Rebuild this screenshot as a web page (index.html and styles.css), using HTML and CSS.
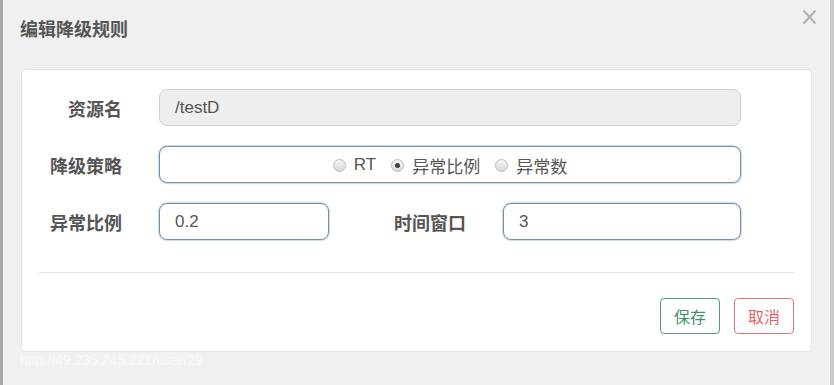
FILE: index.html
```html
<!DOCTYPE html>
<html lang="zh-CN">
<head>
    <meta charset="UTF-8">
    <title>编辑降级规则</title>
    <link rel="stylesheet" href="styles.css">
</head>
<body>
    <div class="frame">
        <div class="modal-header">
            <h3 class="modal-title">编辑降级规则</h3>
            <button class="close" type="button">
                <svg width="15" height="16" viewBox="0 0 15 16"><path d="M1.5 1.5 L13.5 14.5 M13.5 1.5 L1.5 14.5" stroke="#b0b0b0" stroke-width="2" fill="none"/></svg>
            </button>
        </div>

        <div class="panel">
            <div class="form-row">
                <label class="label">资源名</label>
                <input class="input input-disabled input-wide" type="text" value="/testD" disabled>
            </div>
            <div class="form-row">
                <label class="label">降级策略</label>
                <div class="input input-wide radio-group">
                    <span class="radio"><i class="dot"></i>RT</span>
                    <span class="radio"><i class="dot checked"></i>异常比例</span>
                    <span class="radio"><i class="dot"></i>异常数</span>
                </div>
            </div>
            <div class="form-row">
                <label class="label">异常比例</label>
                <input class="input input-short" type="text" value="0.2">
                <label class="label label-inline">时间窗口</label>
                <input class="input input-mid" type="text" value="3">
            </div>

            <div class="divider"></div>

            <div class="actions">
                <button class="btn btn-save" type="button">保存</button>
                <button class="btn btn-cancel" type="button">取消</button>
            </div>
        </div>

        <div class="url">http://49.235.245.221/user/29</div>
    </div>
</body>
</html>
```

FILE: styles.css
```css
body {
    margin: 0;
    padding: 0;
    background-color: #f0f0f0;
    font-family: "Liberation Sans", "Noto Sans CJK SC", sans-serif;
}

/* окно диалога */
.frame {
    height: 385px;
    box-sizing: border-box;
    border-left: 3px solid #a8a8a8;
    border-right: 4px solid #c9c9c9;
    background-color: #f0f0f0;
}

.modal-header {
    display: flex;
    justify-content: space-between;
    align-items: flex-start;
    height: 69px;
    padding-left: 17px;
    padding-right: 13px;
}

.modal-title {
    margin: 18px 0 0;
    font-size: 18px;
    line-height: 24px;
    font-weight: bold;
    color: #555;
}

.close {
    margin-top: 9px;
    padding: 0;
    border: none;
    background: transparent;
    cursor: pointer;
}

.panel {
    margin-left: 18px;
    width: 791px;
    height: 283px;
    box-sizing: border-box;
    background-color: #fff;
    border: 1px solid #e3e3e3;
    border-radius: 4px;
    padding-top: 19px;
}

.form-row {
    display: flex;
    align-items: center;
    margin-bottom: 20px;
}

.label {
    width: 100px;
    margin-right: 37px;
    text-align: right;
    font-size: 18px;
    font-weight: bold;
    color: #555;
}

.label-inline {
    width: 74px;
    margin-left: 63px;
}

.input {
    height: 37px;
    box-sizing: border-box;
    padding: 0 15px;
    font-family: inherit;
    font-size: 17px;
    color: #555;
    background-color: #fff;
    border: 1px solid #6f90b1;
    border-radius: 8px;
    box-shadow: 0 0 1px 1px rgba(110, 145, 180, 0.35);
    outline: none;
}

.input-disabled {
    background-color: #eee;
    border-color: #cfcfcf;
    box-shadow: none;
}

.input-wide {
    width: 582px;
}

.input-short {
    width: 170px;
}

.input-mid {
    width: 238px;
}

.radio-group {
    display: flex;
    justify-content: center;
    align-items: center;
    gap: 15px;
    padding-top: 1px;
}

.radio {
    display: flex;
    align-items: center;
    font-size: 17px;
    color: #555;
}

.dot {
    width: 11px;
    height: 11px;
    margin-right: 8px;
    border: 1px solid #bdbdbd;
    border-radius: 50%;
    background: linear-gradient(#f6f6f6, #d9d9d9);
    position: relative;
}

.dot.checked::after {
    content: "";
    position: absolute;
    left: 3px;
    top: 3px;
    width: 5px;
    height: 5px;
    border-radius: 50%;
    background-color: #444;
}

.divider {
    margin: 32px 17px 0;
    border-top: 1px solid #e6e6e6;
}

.actions {
    display: flex;
    justify-content: flex-end;
    gap: 14px;
    margin-top: 25px;
    padding-right: 17px;
}

.btn {
    width: 60px;
    height: 36px;
    box-sizing: border-box;
    background-color: #fff;
    border-radius: 4px;
    font-family: inherit;
    font-size: 16px;
    cursor: pointer;
}

.btn-save {
    border: 1px solid #4f9e72;
    color: #3e9262;
}

.btn-cancel {
    border: 1px solid #d9787a;
    color: #d9686a;
}

.url {
    margin: 0 0 0 17px;
    font-size: 14px;
    color: #f8f8f8;
}
```
